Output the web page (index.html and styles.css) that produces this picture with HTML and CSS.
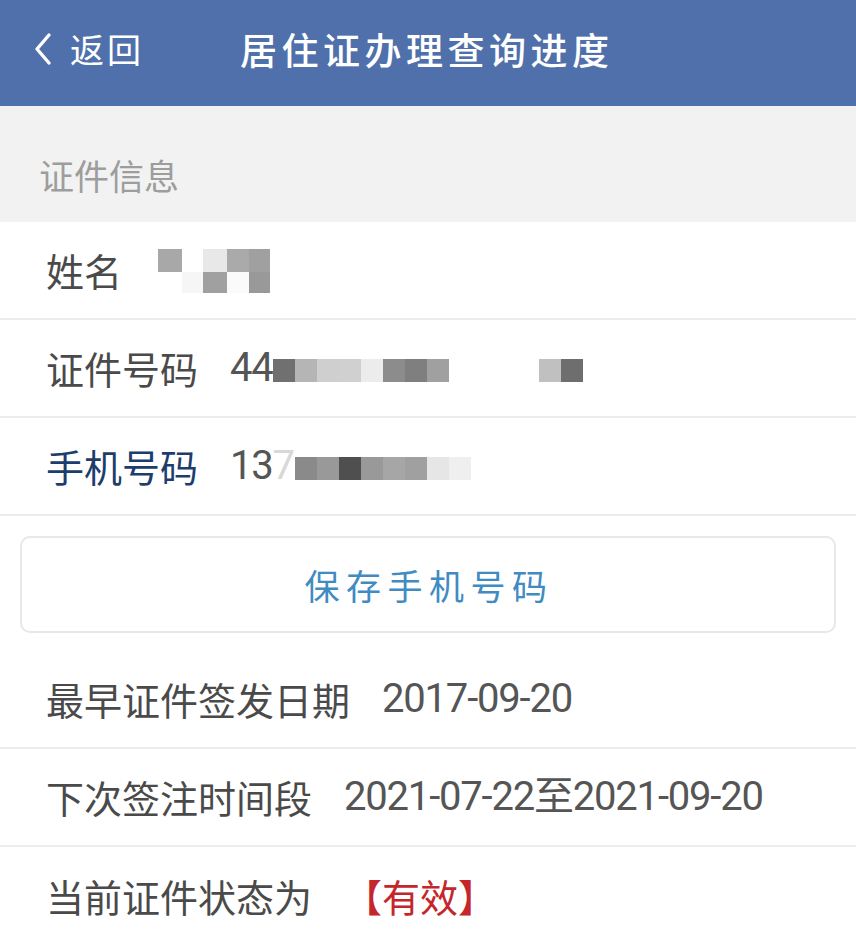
FILE: index.html
```html
<!DOCTYPE html>
<html lang="zh-CN">
<head>
<meta charset="utf-8">
<title>居住证办理查询进度</title>
<link rel="stylesheet" href="styles.css">
</head>
<body>
<header class="topbar">
  <div class="back">
    <svg class="chev" width="22" height="34" viewBox="0 0 22 34"><polyline points="17,3 5,17 17,31" fill="none" stroke="#ffffff" stroke-width="3.4" stroke-linecap="round" stroke-linejoin="round"/></svg>
    <span class="back-text">返回</span>
  </div>
  <h1 class="title">居住证办理查询进度</h1>
</header>

<div class="section-head">证件信息</div>

<div class="row">
  <span class="label">姓名</span>
  <div class="mosaic-name">
    <i class="c sa8"></i><i class="c"></i><i class="c se8"></i><i class="c saa"></i><i class="c sa0"></i>
    <i class="c"></i><i class="c sf6"></i><i class="c sa0"></i><i class="c sfa"></i><i class="c s99"></i>
  </div>
</div>

<div class="row">
  <span class="label">证件号码</span>
  <span class="value">44</span>
  <div class="mosaic-line id">
    <i class="c s70"></i><i class="c sb5"></i><i class="c scf"></i><i class="c sd0"></i><i class="c sec"></i><i class="c s8c"></i><i class="c s7f"></i><i class="c sa0"></i>
    <i class="c gap"></i>
    <i class="c sc0"></i><i class="c s6e"></i>
  </div>
</div>

<div class="row">
  <span class="label phone">手机号码</span>
  <span class="value">13<span class="faint">7</span></span>
  <div class="mosaic-line ph">
    <i class="c s8a"></i><i class="c s99"></i><i class="c s4f"></i><i class="c s99"></i><i class="c sa6"></i><i class="c sa0"></i><i class="c se6"></i><i class="c sef"></i>
  </div>
</div>

<div class="btn-wrap">
  <button class="save-btn">保存手机号码</button>
</div>

<div class="row">
  <span class="label">最早证件签发日期</span>
  <span class="value">2017-09-20</span>
</div>

<div class="row">
  <span class="label">下次签注时间段</span>
  <span class="value">2021-07-22至2021-09-20</span>
</div>

<div class="row last">
  <span class="label">当前证件状态为</span>
  <span class="status">【有效】</span>
</div>
</body>
</html>
```

FILE: styles.css
```css
html, body {
  margin: 0;
  padding: 0;
  background: #ffffff;
}

body {
  width: 856px;
  font-family: "Noto Sans CJK SC", sans-serif;
  color: #4a4a4a;
  overflow: hidden;
}

.topbar {
  height: 106px;
  background: #4f70aa;
  display: flex;
  align-items: center;
  padding: 0 0 8px 32px;
  box-sizing: border-box;
  color: #ffffff;
}

.back {
  display: flex;
  align-items: center;
  width: 208px;
}

.chev {
  display: block;
  margin-right: 16px;
}

.back-text {
  font-size: 34px;
  letter-spacing: 3px;
  line-height: 1;
}

.title {
  margin: 0;
  font-size: 37px;
  font-weight: 500;
  letter-spacing: 4.5px;
  line-height: 1;
}

.section-head {
  background: #f2f2f2;
  height: 116px;
  box-sizing: border-box;
  padding: 51px 0 0 39px;
  font-size: 35px;
  line-height: 36px;
  color: #9d9d9d;
}

.row {
  height: 98px;
  box-sizing: border-box;
  border-bottom: 2px solid #ececec;
  display: flex;
  align-items: center;
  padding: 0 0 0 46px;
}

.row.last {
  border-bottom: none;
}

.label {
  font-size: 38px;
  line-height: 1;
  color: #4a4a4a;
  margin-right: 32px;
}

.label.phone {
  color: #1d3d6c;
}

.value {
  font-family: Roboto, "Noto Sans CJK SC", sans-serif;
  font-size: 40px;
  letter-spacing: -1.2px;
  line-height: 1;
  color: #555555;
}

.faint {
  color: #d8d8d8;
}

.status {
  font-size: 38px;
  line-height: 1;
  color: #c4262b;
}

.mosaic-name {
  display: grid;
  grid-template-columns: 24px 21px 24px 22px 21px;
  grid-template-rows: 23px 21px;
  margin-left: 4px;
  margin-top: 2px;
}

.mosaic-line {
  display: flex;
  height: 23px;
}

.mosaic-line.id {
  margin-left: 0;
  margin-top: 4px;
}

.mosaic-line.ph {
  margin-left: 1px;
  margin-top: 4px;
}

.c {
  display: block;
  width: 22px;
  height: 100%;
}

.mosaic-name .c {
  width: auto;
}

.c.gap { width: 90px; }

.s4f { background: #4f4f4f; }
.s6e { background: #6e6e6e; }
.s70 { background: #707070; }
.s7f { background: #7f7f7f; }
.s8a { background: #8a8a8a; }
.s8c { background: #8c8c8c; }
.s99 { background: #999999; }
.sa0 { background: #a0a0a0; }
.sa6 { background: #a6a6a6; }
.sa8 { background: #a8a8a8; }
.saa { background: #aaaaaa; }
.sb5 { background: #b5b5b5; }
.sc0 { background: #c0c0c0; }
.scf { background: #cfcfcf; }
.sd0 { background: #d0d0d0; }
.se6 { background: #e6e6e6; }
.se8 { background: #e8e8e8; }
.sec { background: #ececec; }
.sef { background: #efefef; }
.sf6 { background: #f6f6f6; }
.sfa { background: #fafafa; }

.btn-wrap {
  padding: 20px 20px 18px 20px;
}

.save-btn {
  display: block;
  width: 100%;
  height: 97px;
  box-sizing: border-box;
  background: #ffffff;
  border: 2px solid #e8e8e8;
  border-radius: 10px;
  font-family: "Noto Sans CJK SC", sans-serif;
  font-size: 35px;
  letter-spacing: 6.5px;
  padding: 0 0 0 2px;
  color: #3f8bc2;
  line-height: 1;
}
```
